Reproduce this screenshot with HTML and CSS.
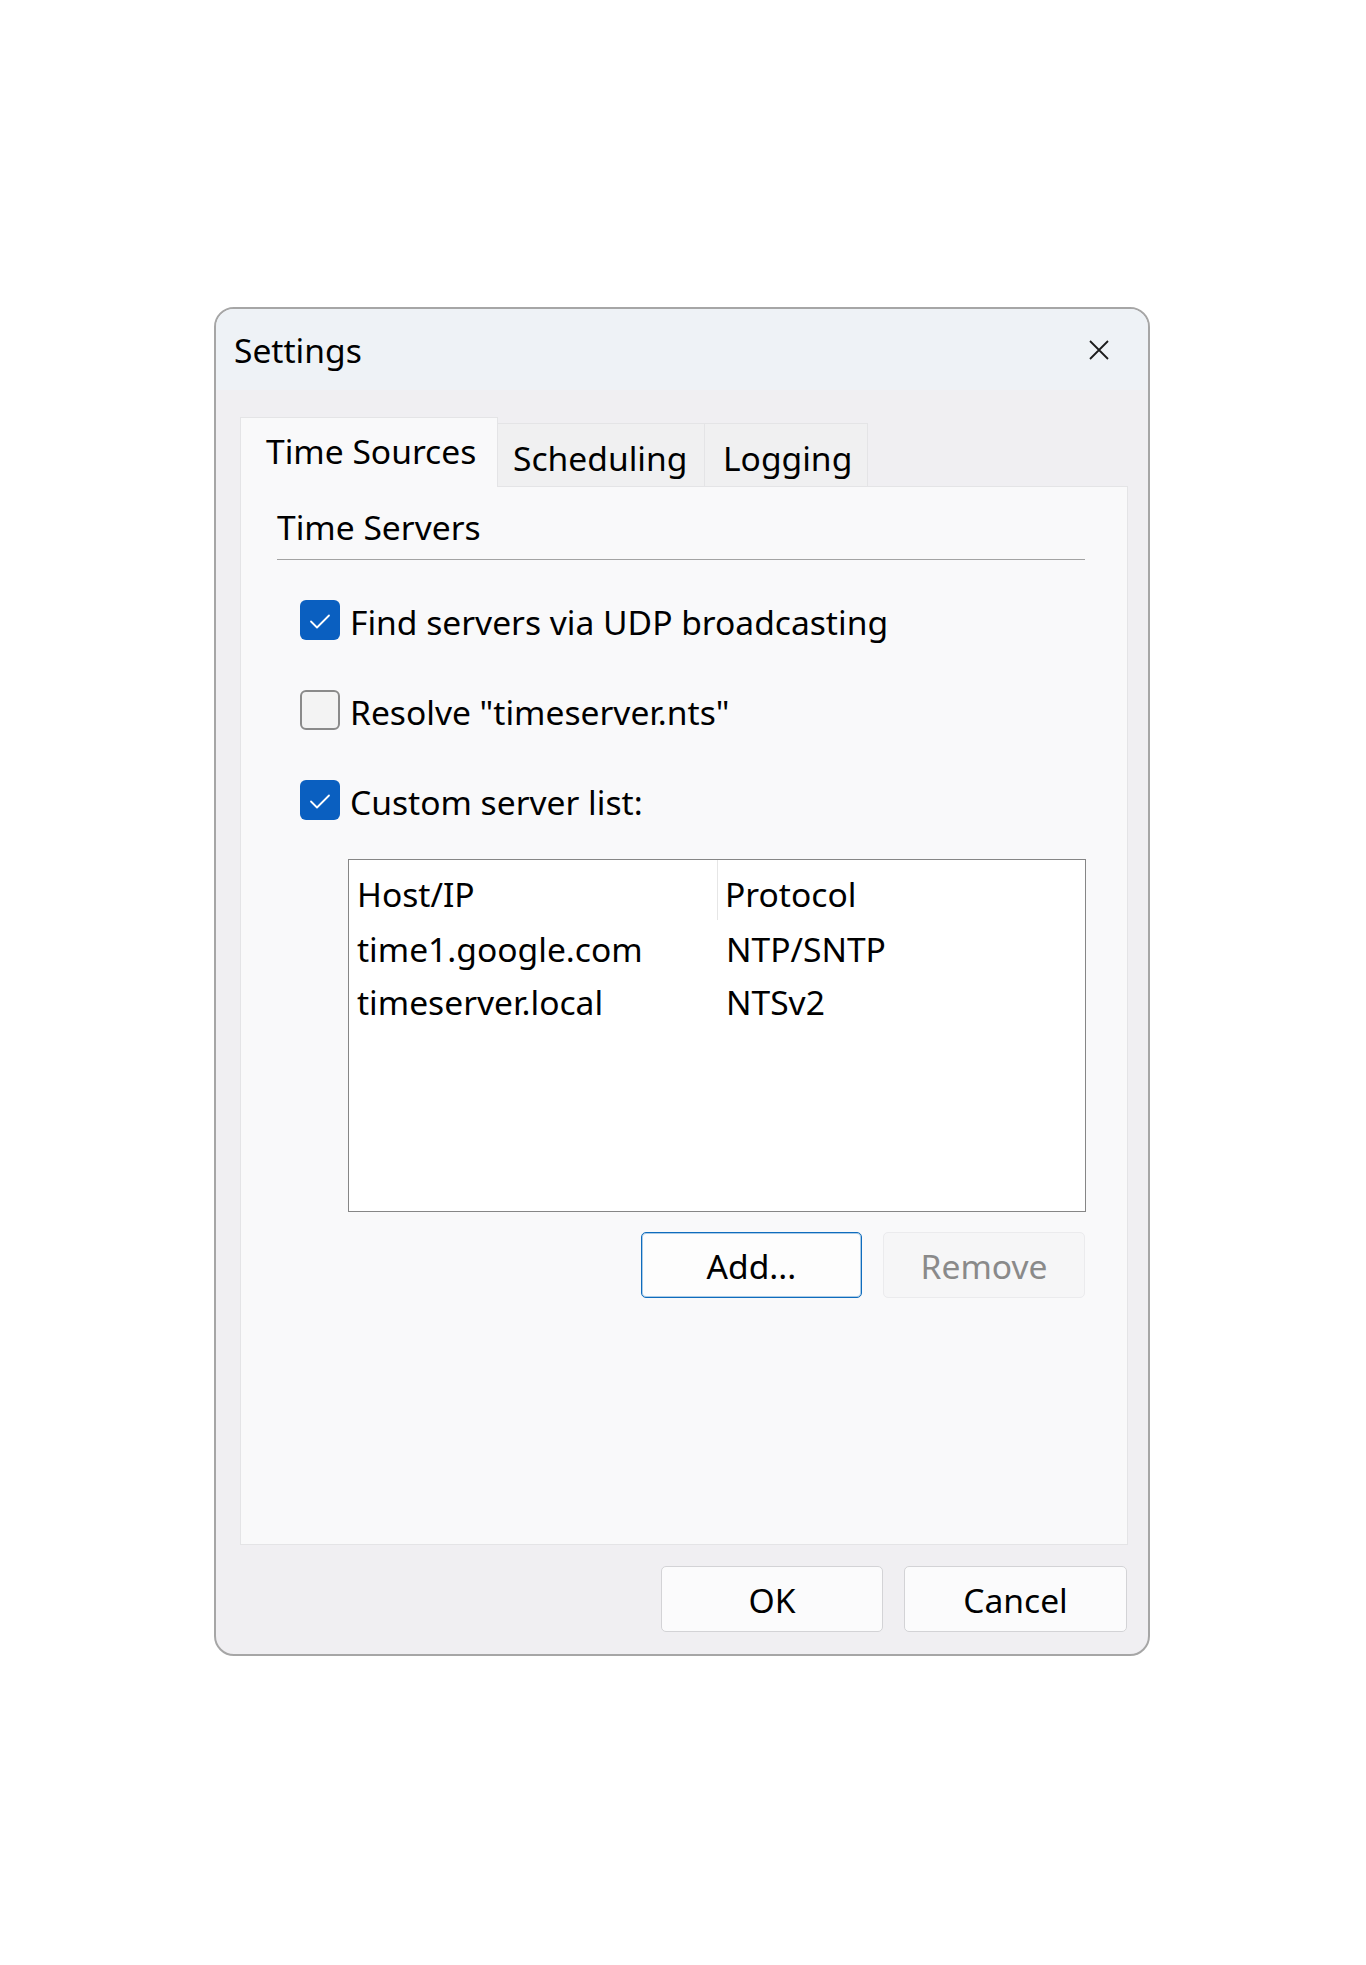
FILE: index.html
```html
<!DOCTYPE html>
<html lang="en">
<head>
<meta charset="utf-8">
<title>Settings</title>
<link rel="stylesheet" href="styles.css">
</head>
<body>
<div class="stage">
  <div class="dialog">
    <div class="titlebar">
      <span class="title">Settings</span>
      <span class="close" aria-label="Close">
        <svg width="20" height="20" viewBox="0 0 20 20"><path d="M1 1 L19 19 M19 1 L1 19" stroke="#1b1b1b" stroke-width="1.8" fill="none"/></svg>
      </span>
    </div>
    <div class="body">
      <div class="tabstrip">
        <div class="tab active">Time Sources</div>
        <div class="tab tab-sched">Scheduling</div>
        <div class="tab tab-log">Logging</div>
      </div>
      <div class="panel">
        <div class="group-head">Time Servers</div>
        <div class="options">
          <div class="option">
            <span class="check checked">
              <svg width="40" height="40" viewBox="0 0 40 40"><polyline points="11,21.5 17,27.5 29,15.5" fill="none" stroke="#fff" stroke-width="1.8" stroke-linecap="round" stroke-linejoin="round"/></svg>
            </span>
            <span class="label">Find servers via UDP broadcasting</span>
          </div>
          <div class="option">
            <span class="check"></span>
            <span class="label">Resolve "timeserver.nts"</span>
          </div>
          <div class="option">
            <span class="check checked">
              <svg width="40" height="40" viewBox="0 0 40 40"><polyline points="11,21.5 17,27.5 29,15.5" fill="none" stroke="#fff" stroke-width="1.8" stroke-linecap="round" stroke-linejoin="round"/></svg>
            </span>
            <span class="label">Custom server list:</span>
          </div>
        </div>
        <div class="list">
          <div class="list-row list-head">
            <div class="cell col-host">Host/IP</div>
            <div class="cell col-proto">Protocol</div>
          </div>
          <div class="list-body">
            <div class="list-row">
              <div class="cell col-host">time1.google.com</div>
              <div class="cell col-proto">NTP/SNTP</div>
            </div>
            <div class="list-row">
              <div class="cell col-host">timeserver.local</div>
              <div class="cell col-proto">NTSv2</div>
            </div>
          </div>
        </div>
        <div class="list-actions">
          <button class="btn btn-add">Add...</button>
          <button class="btn btn-remove" disabled>Remove</button>
        </div>
      </div>
      <div class="footer">
        <button class="btn btn-ok">OK</button>
        <button class="btn btn-cancel">Cancel</button>
      </div>
    </div>
  </div>
</div>
</body>
</html>
```

FILE: styles.css
```css
html, body {
  margin: 0;
  padding: 0;
  background: #ffffff;
}

body {
  font-family: "Noto Sans", "Open Sans", sans-serif;
  font-size: 33.6px;
  color: #000000;
}

.stage {
  padding: 307px 0 0 214px;
}

.dialog {
  width: 936px;
  height: 1349px;
  box-sizing: border-box;
  border: 2px solid #a6a6a6;
  border-radius: 20px;
  background: #f0eff2;
  overflow: hidden;
  display: flex;
  flex-direction: column;
}

.titlebar {
  height: 81px;
  flex: none;
  background: #eef2f6;
  display: flex;
  align-items: center;
  justify-content: space-between;
  padding: 0 39px 0 18px;
}

.title {
  line-height: 46px;
}

.close {
  width: 20px;
  height: 20px;
  display: block;
}

.close svg {
  display: block;
}

.body {
  flex: 1;
  display: flex;
  flex-direction: column;
  padding: 27px 20px 22px 24px;
}

.tabstrip {
  display: flex;
  align-items: flex-end;
  height: 69px;
  flex: none;
}

.tab {
  box-sizing: border-box;
  height: 63px;
  line-height: 46px;
  padding: 11px 0 0 16px;
  background: #f0f0f1;
  border: 1px solid #e4e4e6;
  border-bottom: none;
  border-left: none;
}

.tab.active {
  height: 70px;
  width: 258px;
  padding: 10px 0 0 25px;
  background: #f9f9fa;
  border-left: 1px solid #e4e4e6;
  margin-bottom: -1px;
  position: relative;
  z-index: 1;
}

.tab-sched {
  width: 207px;
  padding-left: 15px;
}

.tab-log {
  width: 163px;
  padding-left: 18px;
}

.panel {
  flex: 1;
  background: #f9f9fa;
  border: 1px solid #e4e4e6;
  display: flex;
  flex-direction: column;
}

.group-head {
  margin: 17px 42px 0 36px;
  padding-bottom: 9px;
  line-height: 46px;
  border-bottom: 1px solid #a3a3a3;
}

.options {
  display: flex;
  flex-direction: column;
  gap: 50px;
  margin: 40px 0 0 59px;
}

.option {
  display: flex;
  align-items: center;
  height: 40px;
  gap: 10px;
}

.check {
  width: 40px;
  height: 40px;
  box-sizing: border-box;
  border-radius: 6px;
  border: 2px solid #8a8a8a;
  background: #f3f3f3;
  flex: none;
}

.check.checked {
  border: none;
  background: #0a5fc0;
}

.check svg {
  display: block;
}

.label {
  line-height: 40px;
  padding-top: 3px;
}

.list {
  margin: 39px 41px 0 107px;
  height: 353px;
  box-sizing: border-box;
  background: #ffffff;
  border: 1px solid #868686;
}

.list-row {
  display: flex;
  height: 53px;
  line-height: 53px;
}

.list-body {
  padding-top: 3px;
}

.list-head {
  height: 60px;
  line-height: 52px;
}

.list-head .cell {
  padding-top: 8px;
}

.cell {
  box-sizing: border-box;
  white-space: nowrap;
}

.col-host {
  width: 369px;
  padding-left: 8px;
}

.list-head .col-host {
  border-right: 1px solid #e6e6e6;
}

.col-proto {
  padding-left: 7px;
}

.list-body .col-proto {
  padding-left: 8px;
}

.list-actions {
  display: flex;
  justify-content: flex-end;
  gap: 21px;
  margin: 20px 42px 0 0;
}

.btn {
  font-family: inherit;
  font-size: 33.6px;
  height: 66px;
  box-sizing: border-box;
  border-radius: 5px;
  border: 1px solid #d3d3d6;
  background: #fbfbfc;
  color: #000000;
  padding: 2px 0 0;
  line-height: 46px;
}

.btn-add {
  width: 221px;
  border: 1px solid #0f6cbd;
  box-shadow: inset 0 0 0 1px rgba(15, 108, 189, 0.35);
  background: #fdfdfd;
}

.btn-remove {
  width: 202px;
  background: #f6f6f7;
  border: 1px solid #ebebed;
  color: #8a8a8a;
}

.footer {
  display: flex;
  justify-content: flex-end;
  gap: 21px;
  margin-top: 21px;
  padding-right: 1px;
  flex: none;
}

.btn-ok {
  width: 222px;
}

.btn-cancel {
  width: 223px;
}
```
